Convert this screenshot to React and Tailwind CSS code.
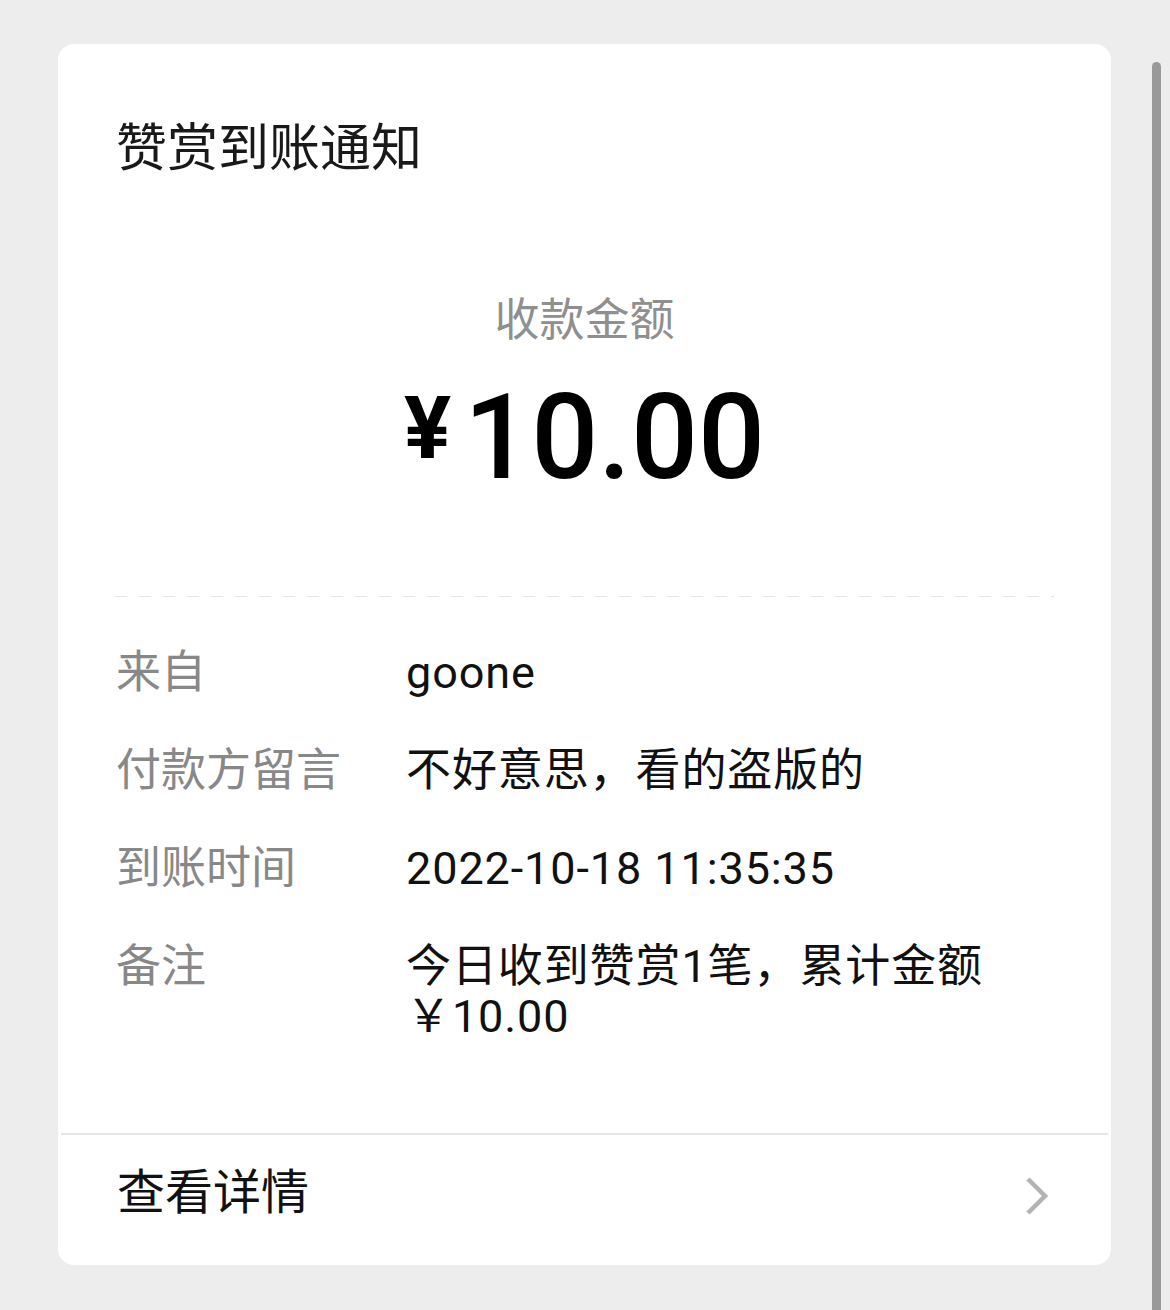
import React from "react";

const cjk = "font-['Roboto','Noto_Sans_CJK_SC',sans-serif]";

function Row({ label, children }) {
  return (
    <div className="flex">
      <div className="w-[290px] shrink-0 text-[45px] leading-[50px] text-[#888888]">{label}</div>
      <div className="flex-1 text-[45px] leading-[50px] tracking-[0.9px] text-[#111111]">{children}</div>
    </div>
  );
}

export default function App() {
  return (
    <div className={`relative min-h-[1310px] bg-[#ededed] pt-[44px] pb-[45px] ${cjk}`}>
      <div className="ml-[58px] w-[1053px] rounded-[16px] bg-white">
        <div className="pl-[58px] pr-[60px] pt-[79px]">
          <div className="text-[51px] leading-none text-[#191919]">赞赏到账通知</div>
        </div>

        <div className="mt-[124px] flex flex-col items-center">
          <div className="text-[45px] leading-none text-[#8f8f8f]">收款金额</div>
          <div className="mt-[36px] flex items-start font-['Roboto',sans-serif] text-black">
            <span className="mt-[5px] text-[88px] font-bold leading-none">¥</span>
            <span className="ml-[13px] text-[118px] font-medium leading-none">10.00</span>
          </div>
        </div>

        <div className="mx-[57px] mt-[99px] h-[1px] bg-[repeating-linear-gradient(to_right,#e3e3e3_0px,#e3e3e3_12px,transparent_12px,transparent_24px)]" />

        <div className="flex flex-col gap-[48px] pl-[58px] pr-[60px] pt-[51px] pb-[91px]">
          <Row label="来自">goone</Row>
          <Row label="付款方留言">不好意思，看的盗版的</Row>
          <Row label="到账时间">2022-10-18 11:35:35</Row>
          <Row label="备注">
            今日收到赞赏1笔，累计金额
            <br />
            ￥10.00
          </Row>
        </div>

        <div className="mx-[3px] h-[2px] bg-[#e6e6e6]" />

        <div className="flex h-[130px] items-center justify-between pb-[15px] pl-[59px] pr-[62px]">
          <div className="text-[48px] leading-[48px] text-[#111111]">查看详情</div>
          <svg className="mt-[6px]" width="24" height="40" viewBox="0 0 24 40" fill="none">
            <path d="M3 3 L20 20 L3 37" stroke="#b3b3b3" strokeWidth="4.5" strokeLinejoin="miter" />
          </svg>
        </div>
      </div>

      <div className="absolute right-[9px] top-[62px] bottom-0 w-[9px] rounded-t-full bg-[#999999]" />
    </div>
  );
}
